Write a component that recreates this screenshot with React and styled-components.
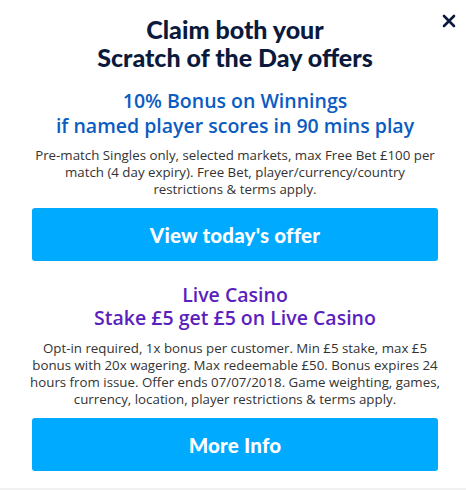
import React from "react";
import styled, { createGlobalStyle } from "styled-components";

const GlobalStyle = createGlobalStyle`
    html, body {
        margin: 0;
        padding: 0;
        background: #f1f1f1;
    }
    body {
        font-family: "Open Sans", "Liberation Sans", sans-serif;
    }
`;

const Modal = styled.div`
    position: relative;
    box-sizing: border-box;
    width: 466px;
    height: 488px;
    background: #ffffff;
    padding: 15px 28px 0 32px;
    display: flex;
    flex-direction: column;
    align-items: center;
`;

const Close = styled.button`
    position: absolute;
    top: 12px;
    right: 8px;
    width: 18px;
    height: 18px;
    padding: 0;
    border: none;
    background: transparent;
    cursor: pointer;
    display: flex;
    align-items: center;
    justify-content: center;
`;

const Title = styled.h1`
    margin: 0;
    font-family: "Lato", "Liberation Sans", sans-serif;
    font-weight: 900;
    font-size: 25px;
    line-height: 28px;
    color: #0b1a3c;
    text-align: center;
`;

const Offer = styled.section`
    width: 100%;
    display: flex;
    flex-direction: column;
    align-items: center;
    margin-top: ${(p) => p.$top}px;
`;

const Heading = styled.h2`
    margin: 0;
    font-family: "Open Sans", "Liberation Sans", sans-serif;
    font-weight: 600;
    font-size: 19.5px;
    line-height: ${(p) => p.$lh}px;
    color: ${(p) => p.$color};
    text-align: center;
`;

const Terms = styled.p`
    margin: ${(p) => p.$gap}px 0 0;
    font-size: 13.3px;
    line-height: 17px;
    color: #333333;
    text-align: center;
    white-space: nowrap;
`;

const Button = styled.button`
    margin-top: 10px;
    width: 406px;
    height: 53px;
    border: none;
    border-radius: 3px;
    background: #00aaff;
    color: #ffffff;
    font-family: "Lato", "Liberation Sans", sans-serif;
    font-weight: 900;
    font-size: 20.5px;
    letter-spacing: 0.2px;
    cursor: pointer;
`;

const App = () => {
    return (
        <>
            <GlobalStyle />
            <Modal>
                <Close aria-label="Close">
                    <svg width="14" height="14" viewBox="0 0 14 14">
                        <path d="M2 2 L12 12 M12 2 L2 12" stroke="#0b1a3c" strokeWidth="2.6" strokeLinecap="round" />
                    </svg>
                </Close>
                <Title>
                    Claim both your
                    <br />
                    Scratch of the Day offers
                </Title>
                <Offer $top={17}>
                    <Heading $color="#0a5cc2" $lh={25}>
                        10% Bonus on Winnings
                        <br />
                        if named player scores in 90 mins play
                    </Heading>
                    <Terms $gap={9}>
                        Pre-match Singles only, selected markets, max Free Bet £100 per
                        <br />
                        match (4 day expiry). Free Bet, player/currency/country
                        <br />
                        restrictions &amp; terms apply.
                    </Terms>
                    <Button>View today's offer</Button>
                </Offer>
                <Offer $top={22}>
                    <Heading $color="#5b1fbe" $lh={23}>
                        Live Casino
                        <br />
                        Stake £5 get £5 on Live Casino
                    </Heading>
                    <Terms $gap={11}>
                        Opt-in required, 1x bonus per customer. Min £5 stake, max £5
                        <br />
                        bonus with 20x wagering. Max redeemable £50. Bonus expires 24
                        <br />
                        hours from issue. Offer ends 07/07/2018. Game weighting, games,
                        <br />
                        currency, location, player restrictions &amp; terms apply.
                    </Terms>
                    <Button>More Info</Button>
                </Offer>
            </Modal>
        </>
    );
};

export default App;
